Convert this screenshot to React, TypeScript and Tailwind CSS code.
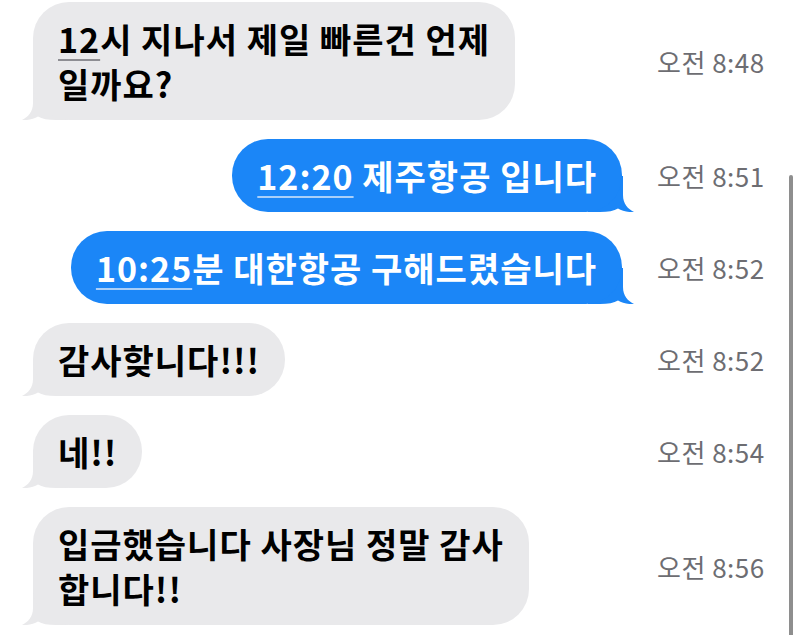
import React from "react";

const FONT = '"Noto Sans CJK KR", "Noto Sans", sans-serif';

function Tail({ side, color }: { side: "left" | "right"; color: string }) {
  const isLeft = side === "left";
  return (
    <svg
      width="46"
      height="36"
      viewBox="0 0 46 36"
      className={isLeft ? "absolute bottom-0 left-[-11px]" : "absolute bottom-0 right-[-12px]"}
      style={isLeft ? undefined : { transform: "scaleX(-1)" }}
    >
      <path
        d="M 11 0 L 11 19 C 11 28, 6 33, 0 36 C 6 36.5, 12 35, 16 32.5 C 20 35, 26 36, 34 36 L 46 36 L 46 0 Z"
        fill={color}
      />
    </svg>
  );
}

function Received({ children, time }: { children: React.ReactNode; time: string }) {
  return (
    <div className="flex items-center">
      <div className="w-[640px] flex justify-start pl-[33px]">
        <div className="relative">
          <div className="relative z-10 rounded-[36px] bg-[#e9e9eb] px-[25px] py-[14px] text-[34px] leading-[45px] tracking-[1px] font-semibold text-black whitespace-nowrap">
            {children}
          </div>
          <Tail side="left" color="#e9e9eb" />
        </div>
      </div>
      <div className="pl-[17px] text-[26px] tracking-[0.5px] text-[#6d6d72]">{time}</div>
    </div>
  );
}

function Sent({ children, time }: { children: React.ReactNode; time: string }) {
  return (
    <div className="flex items-center">
      <div className="w-[640px] flex justify-end pr-[18px]">
        <div className="relative">
          <div className="relative z-10 rounded-[36px] bg-[#1b86f7] px-[25px] py-[14px] text-[34px] leading-[45px] tracking-[1px] font-semibold text-white whitespace-nowrap">
            {children}
          </div>
          <Tail side="right" color="#1b86f7" />
        </div>
      </div>
      <div className="pl-[17px] text-[26px] tracking-[0.5px] text-[#6d6d72]">{time}</div>
    </div>
  );
}

export default function App() {
  return (
    <div
      className="relative w-[800px] h-[635px] overflow-hidden bg-white flex flex-col gap-[19px] pt-[2px]"
      style={{ fontFamily: FONT }}
    >
      <Received time="오전 8:48">
        <span className="underline decoration-[#8e8e93] decoration-2 underline-offset-[6px]">12</span>시 지나서 제일 빠른건 언제
        <br />
        일까요?
      </Received>
      <Sent time="오전 8:51">
        <span className="underline decoration-[#a9cff9] decoration-2 underline-offset-[6px]">12:20</span> 제주항공 입니다
      </Sent>
      <Sent time="오전 8:52">
        <span className="underline decoration-[#a9cff9] decoration-2 underline-offset-[6px]">10:25</span>분 대한항공 구해드렸습니다
      </Sent>
      <Received time="오전 8:52">감사핮니다!!!</Received>
      <Received time="오전 8:54">네!!</Received>
      <Received time="오전 8:56">
        입금했습니다 사장님 정말 감사
        <br />
        합니다!!
      </Received>
      <div className="absolute right-[7px] top-[175px] bottom-0 w-[4px] rounded-t-full bg-[#8e8e8e]" />
    </div>
  );
}
